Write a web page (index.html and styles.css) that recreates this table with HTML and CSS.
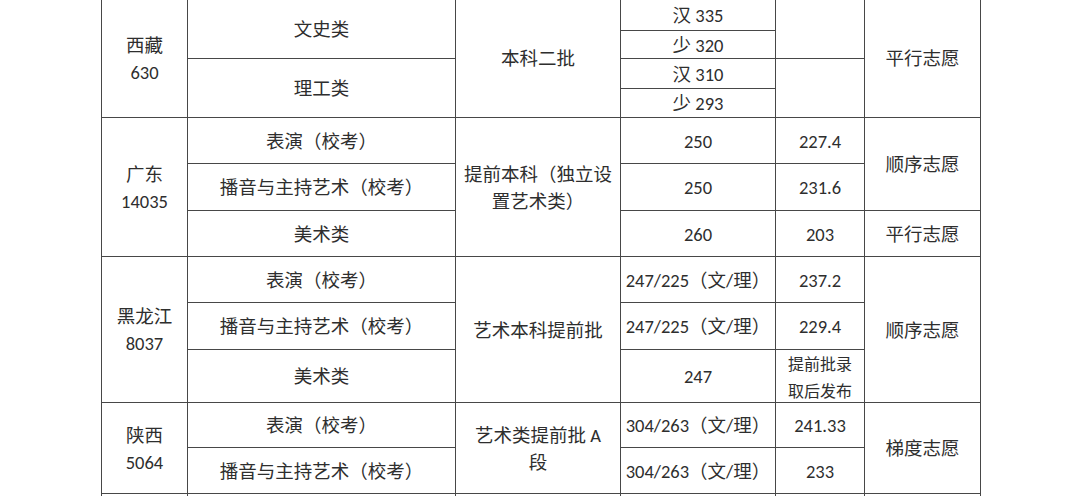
FILE: index.html
```html
<!DOCTYPE html>
<html lang="zh-CN">
<head>
<meta charset="utf-8">
<title>艺术类录取分数线</title>
<link rel="stylesheet" href="styles.css">
</head>
<body>
<div class="sheet">
  <div class="score-grid">
    <!-- 西藏 -->
    <div class="cell span4 two-line">西藏<br>630</div>
    <div class="cell span2">文史类</div>
    <div class="cell span4">本科二批</div>
    <div class="cell">汉 335</div>
    <div class="cell span2"></div>
    <div class="cell span4">平行志愿</div>
    <div class="cell">少 320</div>
    <div class="cell span2">理工类</div>
    <div class="cell">汉 310</div>
    <div class="cell span2"></div>
    <div class="cell">少 293</div>

    <!-- 广东 -->
    <div class="cell span3 two-line">广东<br>14035</div>
    <div class="cell">表演（校考）</div>
    <div class="cell span3 two-line">提前本科（独立设<br>置艺术类）</div>
    <div class="cell">250</div>
    <div class="cell">227.4</div>
    <div class="cell span2">顺序志愿</div>
    <div class="cell">播音与主持艺术（校考）</div>
    <div class="cell">250</div>
    <div class="cell">231.6</div>
    <div class="cell">美术类</div>
    <div class="cell">260</div>
    <div class="cell">203</div>
    <div class="cell">平行志愿</div>

    <!-- 黑龙江 -->
    <div class="cell span3 two-line">黑龙江<br>8037</div>
    <div class="cell">表演（校考）</div>
    <div class="cell span3">艺术本科提前批</div>
    <div class="cell">247/225（文/理）</div>
    <div class="cell">237.2</div>
    <div class="cell span3">顺序志愿</div>
    <div class="cell">播音与主持艺术（校考）</div>
    <div class="cell">247/225（文/理）</div>
    <div class="cell">229.4</div>
    <div class="cell">美术类</div>
    <div class="cell">247</div>
    <div class="cell small two-line">提前批录<br>取后发布</div>

    <!-- 陕西 -->
    <div class="cell span2 two-line">陕西<br>5064</div>
    <div class="cell">表演（校考）</div>
    <div class="cell span2 two-line">艺术类提前批 A<br>段</div>
    <div class="cell">304/263（文/理）</div>
    <div class="cell">241.33</div>
    <div class="cell span2">梯度志愿</div>
    <div class="cell">播音与主持艺术（校考）</div>
    <div class="cell">304/263（文/理）</div>
    <div class="cell">233</div>

    <!-- next section (cut off) -->
    <div class="cell"></div>
    <div class="cell"></div>
    <div class="cell"></div>
    <div class="cell"></div>
    <div class="cell"></div>
    <div class="cell"></div>
  </div>
</div>
</body>
</html>
```
FILE: styles.css
```css
html, body {
  margin: 0;
  padding: 0;
  background: #ffffff;
  overflow: hidden;
}

.sheet {
  padding-left: 101px;
  margin-top: -2px;
}

.score-grid {
  display: grid;
  width: 880px;
  box-sizing: border-box;
  padding: 1px;
  gap: 1px;
  background: #474747;
  grid-template-columns: 85px 267px 164px 154px 88px 115px;
  grid-template-rows: 31px 27px 29px 28px 45px 46px 45px 45px 46px 52px 44px 45px 45px;
  font-family: Carlito, "Liberation Sans", "Noto Sans CJK SC", sans-serif;
  font-size: 18.5px;
  color: #2e2e2e;
}

.cell {
  background: #ffffff;
  display: flex;
  align-items: center;
  justify-content: center;
  text-align: center;
  line-height: 27px;
  padding-top: 1px;
  box-sizing: border-box;
  white-space: nowrap;
}

.span2 { grid-row: span 2; }
.span3 { grid-row: span 3; }
.span4 { grid-row: span 4; }

.small {
  font-size: 16px;
  padding-top: 3px;
}
```
